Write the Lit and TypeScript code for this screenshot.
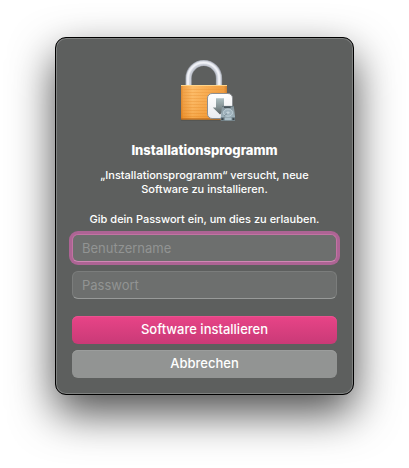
import { LitElement, html, css, svg } from "lit";
import { customElement } from "lit/decorators.js";

@customElement("lock-icon")
class LockIcon extends LitElement {
  static styles = css`
    :host { display: block; line-height: 0; }
  `;

  render() {
    const grooves = [30, 33, 36, 39, 42, 45, 48, 51, 54, 57];
    return html`
      <svg width="63" height="64" viewBox="0 0 63 64" aria-hidden="true">
        <defs>
          <linearGradient id="body" x1="0" x2="1" y1="0" y2="0">
            <stop offset="0" stop-color="#d97d1c" />
            <stop offset="0.05" stop-color="#f09a38" />
            <stop offset="0.25" stop-color="#fdb75c" />
            <stop offset="0.55" stop-color="#f8a643" />
            <stop offset="0.93" stop-color="#ee9530" />
            <stop offset="1" stop-color="#c9721a" />
          </linearGradient>
          <linearGradient id="shade" x1="0" x2="0" y1="0" y2="1">
            <stop offset="0" stop-color="#fff" stop-opacity="0.08" />
            <stop offset="1" stop-color="#d9700a" stop-opacity="0.22" />
          </linearGradient>
          <linearGradient id="tile" x1="0" x2="0" y1="0" y2="1">
            <stop offset="0" stop-color="#ffffff" />
            <stop offset="1" stop-color="#e9ebef" />
          </linearGradient>
          <linearGradient id="arrow" x1="0" x2="0" y1="0" y2="1">
            <stop offset="0" stop-color="#adbfc2" />
            <stop offset="0.6" stop-color="#7e8b8d" />
            <stop offset="1" stop-color="#555c5e" />
          </linearGradient>
          <linearGradient id="drive" x1="0" x2="0" y1="0" y2="1">
            <stop offset="0" stop-color="#84939a" />
            <stop offset="1" stop-color="#a5bac4" />
          </linearGradient>
        </defs>

        <g fill="none">
          <path d="M15.6 28V19.2a15.2 15.2 0 0 1 30.4 0V28" stroke="#a0a4ad" stroke-width="6.2" />
          <path d="M15.6 28V19.2a15.2 15.2 0 0 1 30.4 0V28" stroke="#c9cdd6" stroke-width="4.8" />
          <path d="M15 28V19.2a15.6 15.6 0 0 1 31.2 0V28" stroke="#e3e6ed" stroke-width="2.8" />
          <path d="M15 28V19.2a15.6 15.6 0 0 1 31.2 0V28" stroke="#f3f4f8" stroke-width="1.2" />
        </g>

        <rect x="8" y="60" width="46" height="1.4" fill="#3f3a34" opacity="0.6" />
        <rect x="8" y="26" width="46" height="34.4" rx="0.6" fill="url(#body)" />
        ${grooves.map((y) => svg`<rect x="9" y=${y} width="44" height="1" fill="#e88d26" opacity="0.4" />`)}
        <rect x="8" y="26" width="46" height="34.4" rx="0.6" fill="url(#shade)" />
        <rect x="8" y="26" width="46" height="1" fill="#ffd58a" />
        <rect x="8" y="59.4" width="46" height="1" fill="#b9691b" />

        <rect x="34.5" y="34.5" width="25" height="25" rx="4.6" fill="url(#tile)" stroke="#8c8f93" stroke-width="1" />
        <path d="M43 39.2h8v9.4h3.2L47 55.6 39.8 48.6H43z" fill="url(#arrow)" />

        <path d="M49 47h11.8l1.2 10.6V61.6H47.8V57.6z" fill="url(#drive)" />
        <path d="M49 47.4h11.6" stroke="#6b7980" stroke-width="1" />
        <rect x="51" y="47.6" width="6.6" height="1.2" fill="#3a454b" />
        <ellipse cx="55" cy="53.6" rx="4.6" ry="3.6" fill="#9fb2bc" stroke="#bfd0d8" stroke-width="0.9" />
        <ellipse cx="55" cy="53.6" rx="1.6" ry="1.2" fill="#c3d2d9" />
        <path d="M51 57.2L54 54.6" stroke="#71828b" stroke-width="0.8" />
        <rect x="47.8" y="58.2" width="14.2" height="3.4" fill="#6d7d85" />
        <rect x="51.6" y="58.4" width="7" height="2.8" fill="#adc0c9" />
        <rect x="48.4" y="59.2" width="2" height="1.8" fill="#39454b" />
        <rect x="59.6" y="59.2" width="1.8" height="1.8" fill="#39454b" />
      </svg>
    `;
  }
}

@customElement("app-root")
class AppRoot extends LitElement {
  static styles = css`
    :host {
      display: block;
      box-sizing: border-box;
      min-height: 100vh;
      padding: 37px 55px 72px;
      background: #fff;
      color: #fff;
      font-family: Inter, "Liberation Sans", sans-serif;
      font-size: 11px;
      line-height: 14px;
    }
    * { box-sizing: border-box; }
    .dialog {
      display: flex;
      flex-direction: column;
      align-items: center;
      padding: 21px 16px 16px;
      border: 1px solid #000;
      border-radius: 11px;
      background: #5d5f5e;
      box-shadow:
        inset 0 0 0 1px #7f8180,
        0 18px 44px rgba(0, 0, 0, 0.7);
    }
    .title {
      margin: 19px 0 10px;
      font-size: 13px;
      line-height: 16px;
      font-weight: 800;
    }
    .message {
      margin: 0 0 16px;
      padding: 0 16px;
      text-align: center;
      font-weight: 500;
    }
    .prompt {
      margin: 0 0 8px;
      text-align: center;
      font-weight: 500;
    }
    .form {
      display: flex;
      flex-direction: column;
      width: 100%;
    }
    .fields {
      display: grid;
      gap: 9px;
      margin-bottom: 17px;
    }
    .actions {
      display: grid;
      gap: 6px;
    }
    .field {
      width: 100%;
      height: 28px;
      margin: 0;
      padding: 0 9px;
      border: 1px solid #7b7d7c;
      border-bottom-color: #989a99;
      border-radius: 6px;
      outline: none;
      background: #6d6f6e;
      color: #fff;
      font: inherit;
      font-size: 13px;
    }
    .field::placeholder { color: #929493; opacity: 1; }
    .field.active {
      border-color: #c273a3;
      border-bottom-color: #d088b4;
      box-shadow: 0 0 0 3px #ad6494;
    }
    .button {
      height: 28px;
      padding: 0 12px 2px;
      border: 0;
      border-radius: 6px;
      background: #929493;
      box-shadow: inset 0 1px 0 #9b9d9c;
      color: #fff;
      font: inherit;
      font-size: 13px;
      font-weight: 500;
    }
    .button.primary {
      background: linear-gradient(#e84487, #c93a77);
      box-shadow: inset 0 1px 0 #ea5290;
    }
  `;

  render() {
    return html`
      <main class="dialog" role="dialog" aria-labelledby="title">
        <lock-icon></lock-icon>
        <h1 class="title" id="title">Installationsprogramm</h1>
        <p class="message">„Installationsprogramm“ versucht, neue Software zu installieren.</p>
        <p class="prompt">Gib dein Passwort ein, um dies zu erlauben.</p>
        <form class="form" @submit=${(e: Event) => e.preventDefault()}>
          <div class="fields">
            <input class="field active" type="text" placeholder="Benutzername" aria-label="Benutzername" />
            <input class="field" type="password" placeholder="Passwort" aria-label="Passwort" />
          </div>
          <div class="actions">
            <button class="button primary" type="submit">Software installieren</button>
            <button class="button" type="button">Abbrechen</button>
          </div>
        </form>
      </main>
    `;
  }
}
